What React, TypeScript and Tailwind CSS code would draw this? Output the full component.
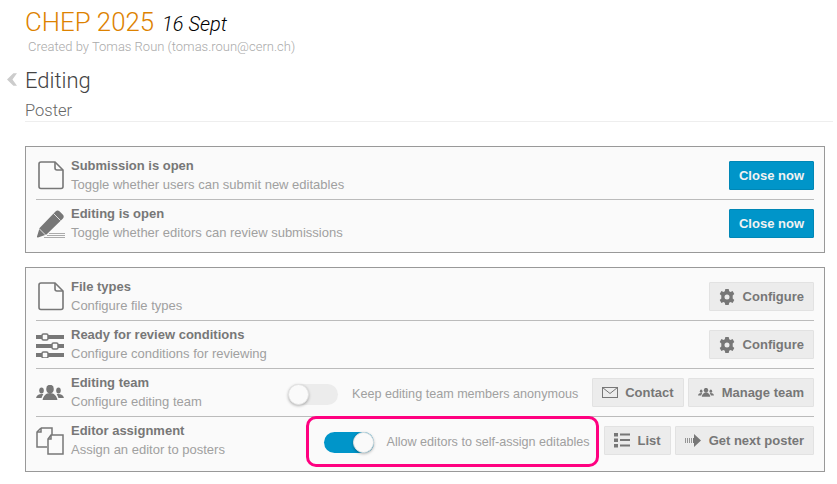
import type { ReactNode } from 'react';

const GREY = '#777';

const FileIcon = () => (
  <svg width="26" height="29" viewBox="0 0 26 29" fill="none" stroke="#777" strokeWidth="1.6" className="ml-[2px]">
    <path d="M3 1h14l8 8v16.5a2 2 0 0 1-2 2H3a2 2 0 0 1-2-2V3a2 2 0 0 1 2-2z" />
    <path d="M17 1v6a2 2 0 0 0 2 2h6" />
  </svg>
);

const PencilIcon = () => (
  <svg width="29" height="29" viewBox="0 0 29 29">
    <path d="M19.5 2.5a3 3 0 0 1 4.2 0l3 3a3 3 0 0 1 0 4.2L10.5 25.5 2 28.5a.8.8 0 0 1-1-1L3.6 19z" fill="#777" />
    <path d="M17.5 4.5l7 7" stroke="#fafafa" strokeWidth="0.8" />
    <path d="M3.5 20l6 6" stroke="#fafafa" strokeWidth="0.8" />
    <path d="M13 24.5h16M11 26.5h18M8 28.5h21" stroke="#aaa" strokeWidth="1" />
  </svg>
);

const SlidersIcon = () => (
  <svg width="28" height="26" viewBox="0 0 28 26" fill="#777">
    <rect x="0" y="3" width="28" height="4" />
    <rect x="0" y="12" width="28" height="4" />
    <rect x="0" y="21" width="28" height="4" />
    <rect x="6" y="2" width="6" height="6" rx="1.5" fill="#fafafa" stroke="#777" strokeWidth="1.5" />
    <rect x="16" y="11" width="6" height="6" rx="1.5" fill="#fafafa" stroke="#777" strokeWidth="1.5" />
    <rect x="6" y="20" width="6" height="6" rx="1.5" fill="#fafafa" stroke="#777" strokeWidth="1.5" />
  </svg>
);

const TeamIcon = ({ size = 28 }: { size?: number }) => (
  <svg width={size} height={size * 0.57} viewBox="0 0 28 16" fill="#777">
    <ellipse cx="14" cy="4" rx="3.8" ry="4.2" />
    <path d="M14 8c-4 0-7 3-7.5 7.5h15C21 11 18 8 14 8z" />
    <ellipse cx="5.5" cy="5.5" rx="2.3" ry="3" />
    <path d="M5.5 9C2.8 9 .5 10.5 0 13h5.5c.5-1.5 1-2.7 1.8-3.7-.5-.2-1.2-.3-1.8-.3z" />
    <ellipse cx="22.5" cy="5.5" rx="2.3" ry="3" />
    <path d="M22.5 9c2.7 0 5 1.5 5.5 4h-5.5c-.5-1.5-1-2.7-1.8-3.7.5-.2 1.2-.3 1.8-.3z" />
  </svg>
);

const CopyIcon = () => (
  <svg width="28" height="28" viewBox="0 0 28 28" fill="none" stroke="#777" strokeWidth="1.5">
    <path d="M5 1h11v7M5 1L1 5v15h10" />
    <path d="M1 5h4V1" />
    <path d="M15 8h12v19H12V12z" fill="#fafafa" />
    <path d="M15 8v4h-3" />
  </svg>
);

const GearIcon = () => (
  <svg width="16" height="16" viewBox="0 0 16 16" fill="#777">
    <path
      fillRule="evenodd"
      d="M6.3 0h3.4l.5 2.2 1.3.7 2.1-.8L15.3 5l-1.6 1.5v3l1.6 1.5-1.7 2.9-2.1-.8-1.3.7L9.7 16H6.3l-.5-2.2-1.3-.7-2.1.8L.7 11l1.6-1.5v-3L.7 5l1.7-2.9 2.1.8 1.3-.7zM8 5.5a2.5 2.5 0 1 0 0 5 2.5 2.5 0 0 0 0-5z"
    />
  </svg>
);

const MailIcon = () => (
  <svg width="16" height="11" viewBox="0 0 16 11" fill="none" stroke="#777" strokeWidth="1">
    <rect x="0.5" y="0.5" width="15" height="10" />
    <path d="M0.5 0.5L8 6.5l7.5-6" />
  </svg>
);

const ListIcon = () => (
  <svg width="16" height="15" viewBox="0 0 16 15" fill="#777">
    <rect x="0" y="0" width="4" height="3.5" />
    <rect x="0" y="5.5" width="4" height="3.5" />
    <rect x="0" y="11" width="4" height="3.5" />
    <rect x="6" y="0.5" width="10" height="2" />
    <rect x="6" y="6" width="10" height="2" />
    <rect x="6" y="11.5" width="10" height="2" />
  </svg>
);

const NextIcon = () => (
  <svg width="16" height="13" viewBox="0 0 16 13" fill="#777">
    <path d="M0 4h1v5H0zM2 4h1v5H2zM4 4h1v5H4zM6 4h1v5H6z" opacity="0.75" />
    <path d="M8 4h1V0l7 6.5-7 6.5V9H8z" />
  </svg>
);

const BackIcon = () => (
  <svg width="10" height="13" viewBox="0 0 11 14" fill="#ccc" className="absolute -left-[18px] top-[7px]">
    <path d="M7 0h4L6 7l5 7H7L0 7z" />
  </svg>
);

function GreyButton({ icon, children, gap = 'gap-[8px]' }: { icon: ReactNode; children: ReactNode; gap?: string }) {
  return (
    <button className={`h-[29px] px-[9px] flex items-center ${gap} bg-[#ececec] border border-[#e2e2e2] rounded-[1px] text-[13px] font-bold text-[#777] whitespace-nowrap`}>
      {icon}
      {children}
    </button>
  );
}

function BlueButton({ children }: { children: ReactNode }) {
  return (
    <button className="w-[85px] h-[29px] bg-[#0095c9] border border-[#0087b6] rounded-[1px] text-[13px] font-bold text-[#f2f2f2]">
      {children}
    </button>
  );
}

function Toggle({ on }: { on?: boolean }) {
  return (
    <span className={`relative block w-[50px] h-[21px] rounded-full ${on ? 'bg-[#0095c9]' : 'bg-[#ececec]'}`}>
      <span
        className={`absolute top-0 w-[21px] h-[21px] rounded-full bg-[#fafafa] border border-[#e4e4e4] shadow-[0_1px_3px_rgba(0,0,0,0.3)] ${on ? 'right-0' : 'left-0'}`}
      />
    </span>
  );
}

function Row({
  icon,
  title,
  text,
  last,
  children,
}: {
  icon: ReactNode;
  title: string;
  text: string;
  last?: boolean;
  children?: ReactNode;
}) {
  return (
    <div className={`h-[48px] flex items-center border-b ${last ? 'border-transparent' : 'border-[#bbb]'}`}>
      <div className="w-[35px] shrink-0 flex items-center">{icon}</div>
      <div className="flex-1">
        <div className="text-[13px] leading-[17px] font-bold" style={{ color: GREY }}>
          {title}
        </div>
        <div className="mt-[1px] text-[13px] leading-[19px] text-[#a0a0a0]">{text}</div>
      </div>
      <div className="flex items-center gap-[4px]">{children}</div>
    </div>
  );
}

export default function App() {
  return (
    <div className="w-[837px] h-[484px] bg-white overflow-hidden font-['Liberation_Sans',sans-serif] relative">
      <div className="pl-[25px] pr-[4px] pt-[7px]">
        <div className="font-['Roboto',sans-serif] font-light flex items-baseline h-[30px]">
          <span className="text-[25.8px] leading-[30px] text-[#dd8200]">CHEP 2025</span>
          <span className="ml-[8px] text-[20px] italic text-black">16 Sept</span>
        </div>
        <div className="pl-[3px] mt-[2px] font-['Roboto',sans-serif] font-light text-[13px] leading-[16px] text-[#aaa]">
          Created by Tomas Roun (tomas.roun@cern.ch)
        </div>
        <div className="relative mt-[11px] font-['Roboto',sans-serif] font-light text-[22px] leading-[30px] text-[#444]">
          <BackIcon />
          Editing
        </div>
        <div className="mt-[4px] border-b border-[#eee] font-['Roboto',sans-serif] font-light text-[16.5px] leading-[21px] text-[#666]">
          Poster
        </div>
      </div>

      <div className="ml-[25px] w-[800px] mt-[24px] border border-[#999] bg-[#fafafa] px-[10px] pt-[5px] pb-[4px]">
        <Row icon={<FileIcon />} title="Submission is open" text="Toggle whether users can submit new editables">
          <BlueButton>Close now</BlueButton>
        </Row>
        <Row icon={<PencilIcon />} title="Editing is open" text="Toggle whether editors can review submissions" last>
          <BlueButton>Close now</BlueButton>
        </Row>
      </div>

      <div className="ml-[25px] w-[800px] mt-[14px] border border-[#999] bg-[#fafafa] px-[10px] pt-[5px] pb-[6px]">
        <Row icon={<FileIcon />} title="File types" text="Configure file types">
          <GreyButton icon={<GearIcon />}>Configure</GreyButton>
        </Row>
        <Row icon={<SlidersIcon />} title="Ready for review conditions" text="Configure conditions for reviewing">
          <GreyButton icon={<GearIcon />}>Configure</GreyButton>
        </Row>
        <Row icon={<TeamIcon />} title="Editing team" text="Configure editing team">
          <div className="flex items-center mt-[4px]">
            <Toggle />
            <span className="ml-[14px] mr-[10px] text-[12.6px] text-[#a0a0a0]">Keep editing team members anonymous</span>
          </div>
          <GreyButton icon={<MailIcon />} gap="gap-[7px]">Contact</GreyButton>
          <GreyButton icon={<TeamIcon size={16} />}>Manage team</GreyButton>
        </Row>
        <Row icon={<CopyIcon />} title="Editor assignment" text="Assign an editor to posters" last>
          <div className="relative flex items-center mr-[10px] mt-[4px]">
            <Toggle on />
            <span className="ml-[13px] text-[12.6px] text-[#a0a0a0]">Allow editors to self-assign editables</span>
            <span className="absolute -left-[18px] -right-[9px] -top-[16px] -bottom-[14px] border-[3px] border-[#ff0080] rounded-[10px]" />
          </div>
          <GreyButton icon={<ListIcon />}>List</GreyButton>
          <GreyButton icon={<NextIcon />}>Get next poster</GreyButton>
        </Row>
      </div>
    </div>
  );
}
